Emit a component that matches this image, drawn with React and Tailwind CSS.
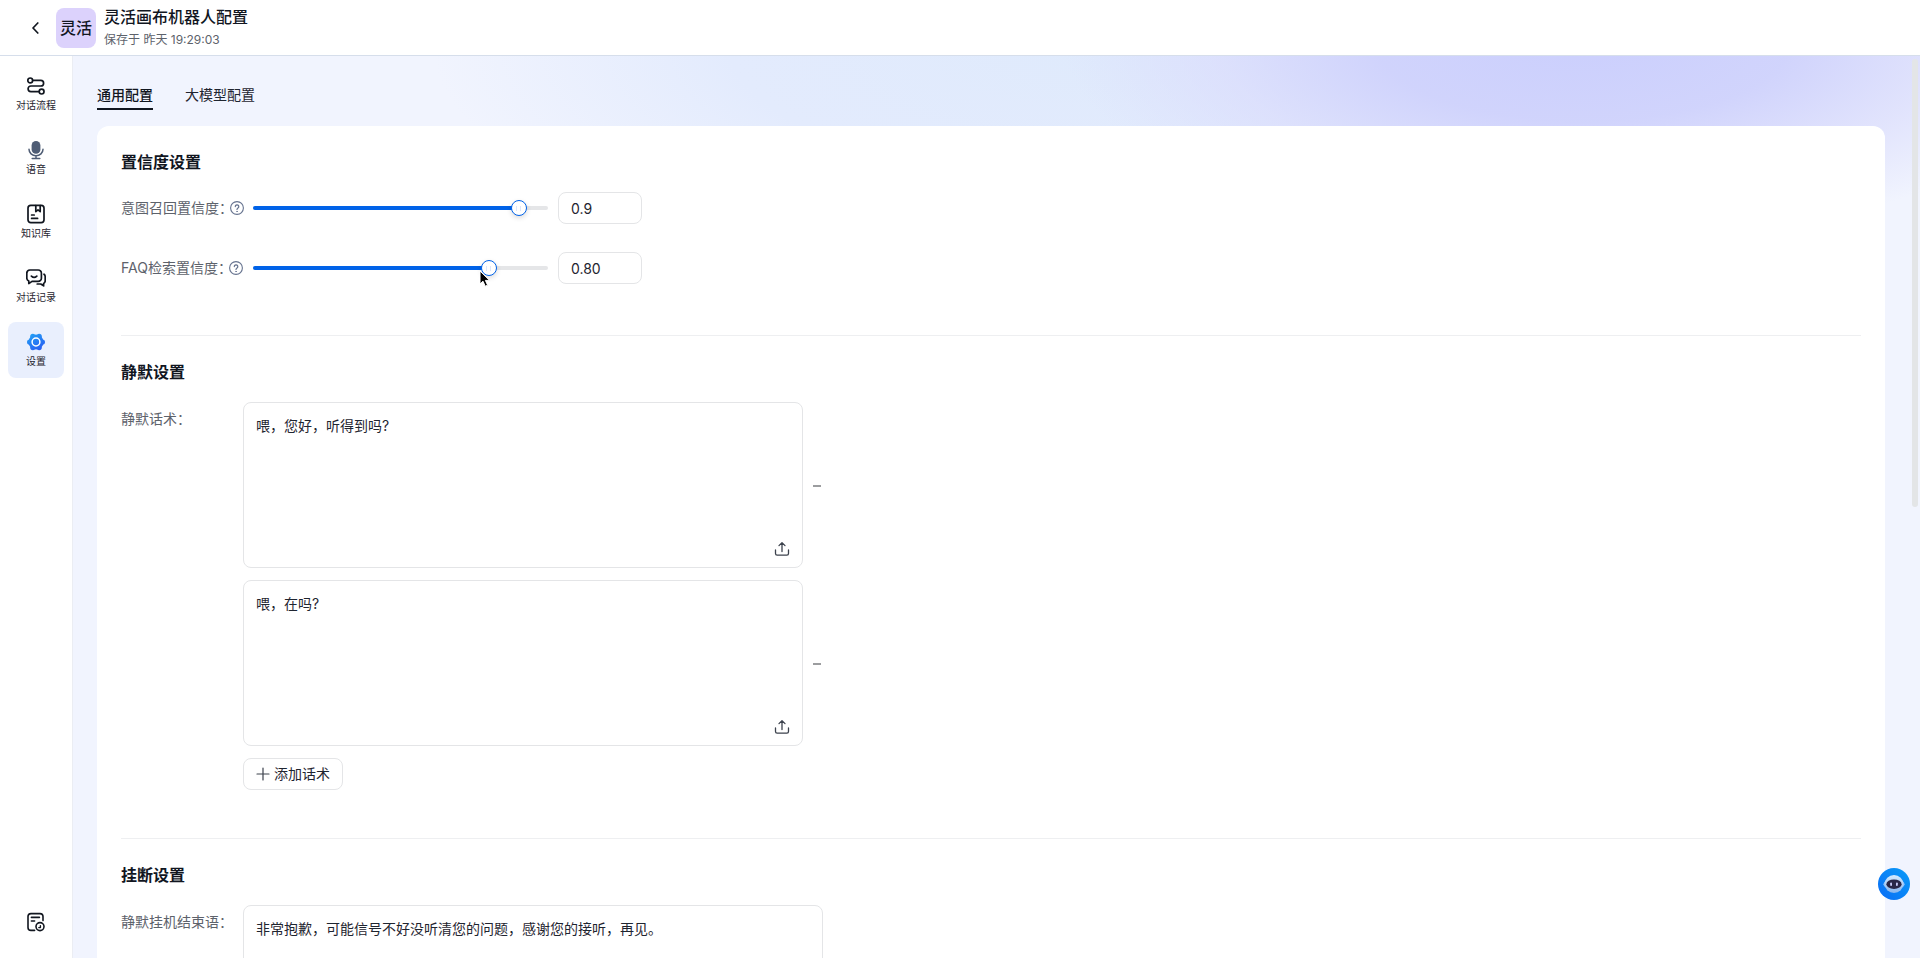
import React, { useState } from "react";

const GRID_BG =
  "bg-[#f1f4fe] bg-[radial-gradient(ellipse_520px_200px_at_1510px_-15px,#cbcffd_0%,#cfd2fcf2_40%,#dadcfcb3_70%,#e6e8fd00_100%),radial-gradient(ellipse_660px_240px_at_1020px_-10px,#dfeafc_0%,#e3ebfd_55%,#f1f4fe00_100%)] bg-no-repeat";

function FlowIcon() {
  return (
    <svg viewBox="0 0 20 20" className="w-5 h-5" fill="none" stroke="#11161f" strokeWidth="1.7" strokeLinecap="round">
      <circle cx="4.2" cy="4.4" r="2.4" />
      <circle cx="15.6" cy="15.6" r="2.4" />
      <path d="M6.8 4.4h8a2.8 2.8 0 0 1 0 5.6H4.9a2.8 2.8 0 0 0 0 5.6h8.2" />
    </svg>
  );
}

function MicIcon() {
  return (
    <svg viewBox="0 0 20 20" className="w-5 h-5" fill="none">
      <rect x="5.6" y="1" width="8.8" height="12.8" rx="4.4" fill="#4f5d75" />
      <path d="M3 9.2a7 6.6 0 0 0 14 0M10 15.8v2.6M6.2 18.4h7.6" stroke="#4f5d75" strokeWidth="1.5" strokeLinecap="round" />
    </svg>
  );
}

function BookIcon() {
  return (
    <svg viewBox="0 0 20 20" className="w-5 h-5" fill="none" stroke="#11161f" strokeWidth="1.7" strokeLinecap="round" strokeLinejoin="round">
      <rect x="2" y="1.4" width="16" height="17.2" rx="2.8" />
      <path d="M9.8 1.6v6l2.2-1.8 2.2 1.8v-6M5.6 11h2.6M5.6 14.4h6" />
    </svg>
  );
}

function ChatIcon() {
  return (
    <svg viewBox="0 0 20 20" className="w-5 h-5" fill="none" stroke="#11161f" strokeWidth="1.7" strokeLinecap="round" strokeLinejoin="round">
      <path d="M3.8 2h8.4a3.2 3.2 0 0 1 3.2 3.2v5a3.2 3.2 0 0 1-3.2 3.2H6L2.8 15.6v-2.6A3.2 3.2 0 0 1 .8 10.2v-5A3.2 3.2 0 0 1 3.8 2z" />
      <path d="M5.4 8.2c1.6 1.5 3.8 1.5 5.4 0M18 6.2c.8.6 1.2 1.4 1.2 2.4v4.2c0 1.3-.6 2.2-1.6 2.7v2.4l-2.8-1.9h-3.6" />
    </svg>
  );
}

function SettingIcon() {
  return (
    <svg viewBox="0 0 20 20" className="w-5 h-5">
      <defs>
        <linearGradient id="gear" gradientUnits="userSpaceOnUse" x1="4" y1="1" x2="14" y2="19">
          <stop offset="0" stopColor="#22a2f5" />
          <stop offset="1" stopColor="#2a5cf2" />
        </linearGradient>
      </defs>
      <g fill="url(#gear)">
        <circle cx="10" cy="10" r="7.6" />
        <circle cx="16.4" cy="10" r="2.6" />
        <circle cx="13.2" cy="4.4" r="2.6" />
        <circle cx="6.8" cy="4.4" r="2.6" />
        <circle cx="3.6" cy="10" r="2.6" />
        <circle cx="6.8" cy="15.6" r="2.6" />
        <circle cx="13.2" cy="15.6" r="2.6" />
      </g>
      <circle cx="10" cy="10" r="3.9" fill="none" stroke="#fff" strokeWidth="1.5" />
    </svg>
  );
}

function LogIcon() {
  return (
    <svg viewBox="0 0 20 20" className="w-5 h-5" fill="none" stroke="#11161f" strokeWidth="1.6" strokeLinecap="round" strokeLinejoin="round">
      <path d="M8.6 18.4H5A3 3 0 0 1 2 15.4V4.6a3 3 0 0 1 3-3h9a3 3 0 0 1 3 3v4M5.4 5.4h8M5.4 9h3.2" />
      <circle cx="14" cy="14.6" r="4" />
      <path d="M12.8 15.6h1.6v-1.8" strokeWidth="1.4" />
    </svg>
  );
}

function UploadIcon() {
  return (
    <svg viewBox="0 0 16 16" className="w-4 h-4" fill="none" stroke="#3c424d" strokeWidth="1.3" strokeLinecap="round" strokeLinejoin="round">
      <path d="M8 10.5V1.8M5 4.6l3-3 3 3M1.5 9v3.6c0 1 .6 1.6 1.6 1.6h9.8c1 0 1.6-.6 1.6-1.6V9" />
    </svg>
  );
}

function HelpIcon() {
  return (
    <svg viewBox="0 0 14 14" className="w-[14px] h-[14px] shrink-0" fill="none" stroke="#66738f" strokeLinecap="round">
      <circle cx="7" cy="7" r="6.4" strokeWidth="1.1" />
      <path d="M5.3 5.6a1.75 1.75 0 1 1 2.7 1.5c-.6.4-1 .7-1 1.3" strokeWidth="1.2" />
      <circle cx="7" cy="10.4" r=".35" fill="#66738f" strokeWidth=".7" />
    </svg>
  );
}

function RobotIcon() {
  return (
    <svg viewBox="0 0 32 32" className="w-8 h-8">
      <defs>
        <linearGradient id="bot" x1="1" y1="0" x2="0" y2="1">
          <stop offset="0" stopColor="#0a9cf8" />
          <stop offset="1" stopColor="#0a6cf5" />
        </linearGradient>
        <linearGradient id="face" x1="0" y1="0" x2="0" y2="1">
          <stop offset="0" stopColor="#d6ecff" />
          <stop offset="1" stopColor="#86b4ee" />
        </linearGradient>
      </defs>
      <circle cx="16" cy="16" r="16" fill="url(#bot)" />
      <ellipse cx="16" cy="16.2" rx="10.6" ry="5" fill="#8fc1fa" />
      <ellipse cx="16" cy="16" rx="9.4" ry="9" fill="url(#face)" />
      <ellipse cx="16" cy="16.2" rx="7.6" ry="4.8" fill="#2a2748" />
      <rect x="12.2" y="14.4" width="1.8" height="3.6" rx=".9" fill="#c9cdfa" />
      <rect x="18" y="14.4" width="1.8" height="3.6" rx=".9" fill="#c9cdfa" />
    </svg>
  );
}

const navItems = [
  { label: "对话流程", icon: FlowIcon },
  { label: "语音", icon: MicIcon },
  { label: "知识库", icon: BookIcon },
  { label: "对话记录", icon: ChatIcon },
  { label: "设置", icon: SettingIcon, active: true },
];

function SliderRow({ id, label, value, onChange, children }) {
  return (
    <div className="flex items-center h-8">
      <div className="w-[132px] flex items-center gap-1">
        <label htmlFor={id} className="text-[#5d626b] [font-feature-settings:'halt']">{label}</label>
        <HelpIcon />
      </div>
      <div className="relative w-[295px] h-4 flex items-center">
        <div className="w-full h-1 rounded-full bg-[#e5e6e8]">
          <div className="h-1 rounded-full bg-[#0062e8]" style={{ width: `${Number(value) * 100}%` }} />
        </div>
        <input
          id={id}
          type="range"
          min="0"
          max="1"
          step="0.01"
          value={value}
          onChange={(e) => onChange(e.target.value)}
          className="confidence-slider absolute inset-y-0 -left-2 w-[311px]"
        />
        {children}
      </div>
      <input
        type="text"
        aria-label={label}
        value={value}
        onChange={(e) => onChange(e.target.value)}
        className="ml-[10px] w-[84px] h-8 px-3 rounded-lg border border-[#e4e5e7] text-[#1f2530] outline-none"
      />
    </div>
  );
}

function SectionTitle({ children }) {
  return <h2 className="text-base leading-6 font-bold text-[#11161f]">{children}</h2>;
}

export default function App() {
  const [recall, setRecall] = useState("0.9");
  const [faq, setFaq] = useState("0.80");
  const [scripts, setScripts] = useState(["喂，您好，听得到吗?", "喂，在吗?"]);
  const [closing, setClosing] = useState("非常抱歉，可能信号不好没听清您的问题，感谢您的接听，再见。");

  const updateScript = (idx, text) => setScripts(scripts.map((s, i) => (i === idx ? text : s)));
  const removeScript = (idx) => setScripts(scripts.filter((_, i) => i !== idx));

  return (
    <div className="h-screen flex flex-col overflow-hidden bg-white text-sm text-[#1f2530] font-[Inter,'Noto_Sans_CJK_SC',sans-serif]">
      {/* Header */}
      <header className="h-14 shrink-0 flex items-center pl-6 border-b border-[#d6deeb]">
        <button aria-label="返回" className="w-6 h-6 flex items-center justify-center">
          <svg viewBox="0 0 12 12" className="w-3 h-3" fill="none" stroke="#11161f" strokeWidth="1.7" strokeLinecap="round" strokeLinejoin="round">
            <path d="M7.8 1L3 6l4.8 5" />
          </svg>
        </button>
        <div className="ml-2 w-10 h-10 rounded-lg bg-[#dcd2fc] flex items-center justify-center text-base leading-5 font-medium text-[#11161f]">
          灵活
        </div>
        <div className="ml-2 flex flex-col gap-[2px]">
          <h1 className="text-base leading-[22px] font-medium text-[#11161f]">灵活画布机器人配置</h1>
          <p className="text-xs leading-5 text-[#5d626b]">保存于 昨天 19:29:03</p>
        </div>
      </header>

      <div className="flex-1 min-h-0 flex">
        {/* Sidebar */}
        <nav className="w-[73px] shrink-0 border-r border-[#ebedf3] px-2 pt-[10px] pb-[26px] flex flex-col gap-2">
          {navItems.map(({ label, icon: Icon, active }) => (
            <button
              key={label}
              className={`w-14 h-14 rounded-lg flex flex-col items-center justify-center gap-[2px] text-[10px] leading-[14px] text-[#1f2530] ${
                active ? "bg-[#e9effd]" : ""
              }`}
            >
              <Icon />
              {label}
            </button>
          ))}
          <button aria-label="日志" className="mt-auto w-14 flex justify-center">
            <LogIcon />
          </button>
        </nav>

        {/* Content */}
        <main className={`relative flex-1 min-w-0 overflow-hidden pl-6 pr-[35px] pt-7 ${GRID_BG}`}>
          <div className="flex gap-8">
            <button className="pb-[2px] leading-[22px] font-medium text-[#11161f] border-b-2 border-[#11161f]">通用配置</button>
            <button className="pb-[2px] leading-[22px] text-[#1f2530] border-b-2 border-transparent">大模型配置</button>
          </div>

          <div className="mt-4 px-6 bg-white rounded-xl">
            <section className="pt-6 pb-[51px] border-b border-[#eeeff1]">
              <SectionTitle>置信度设置</SectionTitle>
              <div className="mt-[18px] flex flex-col gap-7">
                <SliderRow id="recall" label="意图召回置信度：" value={recall} onChange={setRecall} />
                <SliderRow id="faq" label="FAQ检索置信度：" value={faq} onChange={setFaq}>
                  {/* pointer resting on the handle */}
                  <svg viewBox="0 0 12 18" className="absolute left-[226px] top-[10px] w-3 h-[18px] pointer-events-none">
                    <path d="M1 1v13l3-2.8 2.2 5 2.4-1-2.2-4.8h4.2z" fill="#000" stroke="#fff" strokeWidth="1" />
                  </svg>
                </SliderRow>
              </div>
            </section>

            <section className="pt-6 pb-12 border-b border-[#eeeff1]">
              <SectionTitle>静默设置</SectionTitle>
              <div className="mt-[18px] flex">
                <span className="w-[122px] pt-[7px] text-[#5d626b]">静默话术：</span>
                <div className="flex flex-col items-start gap-3">
                  {scripts.map((text, idx) => (
                    <div key={idx} className="flex items-center gap-2">
                      <div className="relative w-[560px] h-[166px] rounded-lg border border-[#e4e5e7]">
                        <textarea
                          aria-label={`静默话术 ${idx + 1}`}
                          value={text}
                          onChange={(e) => updateScript(idx, e.target.value)}
                          className="block w-full h-full resize-none px-3 py-3 leading-[22px] outline-none"
                        />
                        <button aria-label="上传" className="absolute right-3 bottom-[10px]">
                          <UploadIcon />
                        </button>
                      </div>
                      <button aria-label="删除" onClick={() => removeScript(idx)} className="w-3 h-5 pt-[2px] flex items-center justify-center">
                        <span className="w-2 h-[2px] bg-[#9c9d9f]" />
                      </button>
                    </div>
                  ))}
                  <button
                    onClick={() => setScripts([...scripts, ""])}
                    className="h-8 px-3 flex items-center gap-1 rounded-lg border border-[#e4e5e7]"
                  >
                    <svg viewBox="0 0 14 14" className="w-[14px] h-[14px]" stroke="#3c424d" strokeWidth="1.2" strokeLinecap="round">
                      <path d="M7 1v12M1 7h12" />
                    </svg>
                    添加话术
                  </button>
                </div>
              </div>
            </section>

            <section className="pt-6 pb-12">
              <SectionTitle>挂断设置</SectionTitle>
              <div className="mt-[18px] flex">
                <label htmlFor="closing" className="w-[122px] pt-[7px] text-[#5d626b]">静默挂机结束语：</label>
                <textarea
                  id="closing"
                  value={closing}
                  onChange={(e) => setClosing(e.target.value)}
                  className="w-[580px] h-[166px] resize-none px-3 py-3 leading-[22px] rounded-lg border border-[#e4e5e7] outline-none"
                />
              </div>
            </section>
          </div>

          {/* Scroll thumb */}
          <div className="absolute right-[2px] top-[3px] w-[6px] h-[448px] rounded-full bg-[#e3e5e7]" />
        </main>
      </div>

      {/* Assistant */}
      <button aria-label="智能助手" className="fixed right-[10px] bottom-[58px] w-8 h-8">
        <RobotIcon />
      </button>

      <style>
        {`
          .confidence-slider {
            appearance: none;
            background: transparent;
            height: 16px;
            cursor: pointer;
          }
          .confidence-slider::-webkit-slider-thumb {
            appearance: none;
            width: 16px;
            height: 16px;
            border-radius: 50%;
            border: 1px solid #0062e8;
            background:
              linear-gradient(#dde7fa, #dde7fa) 4px 5px / 1px 5px no-repeat,
              linear-gradient(#dde7fa, #dde7fa) 8px 5px / 1px 5px no-repeat,
              #fff;
            box-shadow: 0 2px 5px rgba(0, 0, 0, 0.14);
          }
        `}
      </style>
    </div>
  );
}
